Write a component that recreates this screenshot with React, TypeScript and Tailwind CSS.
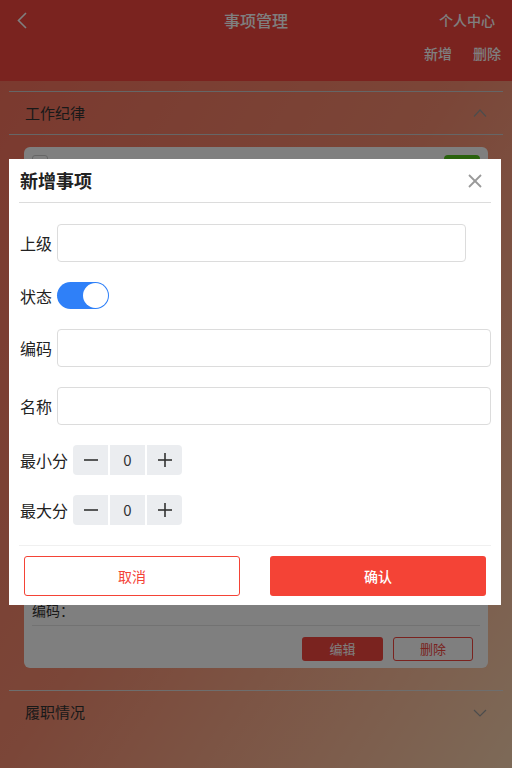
import React from 'react';

const font = { fontFamily: '"Noto Sans CJK SC", "Noto Sans", sans-serif' };

const Stepper = () => (
  <div className="flex gap-[2px]">
    <div className="w-[35px] h-[30px] bg-[#ebedf0] rounded-l-[4px] flex items-center justify-center">
      <svg width="14" height="14" viewBox="0 0 14 14">
        <line x1="0" y1="7" x2="14" y2="7" stroke="#323233" strokeWidth="1.6" />
      </svg>
    </div>
    <div className="w-[35px] h-[30px] bg-[#ebedf0] flex items-center justify-center text-[15px] text-[#323233]">0</div>
    <div className="w-[35px] h-[30px] bg-[#ebedf0] rounded-r-[4px] flex items-center justify-center">
      <svg width="14" height="14" viewBox="0 0 14 14">
        <line x1="0" y1="7" x2="14" y2="7" stroke="#323233" strokeWidth="1.6" />
        <line x1="7" y1="0" x2="7" y2="14" stroke="#323233" strokeWidth="1.6" />
      </svg>
    </div>
  </div>
);

export default function App() {
  return (
    <div className="relative w-full h-[768px] overflow-hidden" style={font}>
      {/* page */}
      <div className="h-full flex flex-col bg-linear-to-br from-[#f6705c] via-[#f68c70] to-[#fad4b0]">
        <div className="bg-[#f4463f] h-[81px] shrink-0">
          <div className="h-[40px] flex items-center justify-between px-[17px] relative">
            <svg width="10" height="17" viewBox="0 0 10 17">
              <polyline points="9,1 1.5,8.5 9,16" fill="none" stroke="#ffffff" strokeWidth="1.6" />
            </svg>
            <span className="absolute left-0 right-0 text-center text-[16px] font-medium text-white pointer-events-none">事项管理</span>
            <span className="text-[14px] font-medium text-white">个人中心</span>
          </div>
          <div className="flex justify-end gap-[21px] pr-[11px] pt-[3px] text-[14px] font-medium text-white">
            <span>新增</span>
            <span>删除</span>
          </div>
        </div>
        <div className="px-[9px] pt-[10px]">
          <div className="border-t border-[#ccc] border-b h-[44px] flex items-center justify-between px-[16px]">
            <span className="text-[15px] text-[#333]">工作纪律</span>
            <svg width="14" height="8" viewBox="0 0 14 8">
              <polyline points="1,7.5 7,1 13,7.5" fill="none" stroke="#999" strokeWidth="1.2" />
            </svg>
          </div>
          <div className="mx-[15px] mt-[12px] h-[521px] bg-white rounded-[6px] flex flex-col px-[8px]">
            <div className="flex justify-between items-start pt-[8px]">
              <div className="w-[16px] h-[16px] border border-[#ccc] rounded-[3px] bg-white" />
              <div className="w-[36px] h-[22px] bg-[#52c41a] rounded-[4px]" />
            </div>
            <div className="flex-1" />
            <div className="text-[14px] text-[#333] pb-[4px]">编码：</div>
            <div className="border-t border-[#e5e5e5] flex justify-end gap-[10px] pt-[11px] pb-[7px] pr-[7px]">
              <div className="w-[81px] h-[24px] bg-[#f4463f] rounded-[3px] flex items-center justify-center text-[13px] text-white">编辑</div>
              <div className="w-[80px] h-[24px] border border-[#f4463f] rounded-[3px] flex items-center justify-center text-[13px] text-[#f4463f]">删除</div>
            </div>
          </div>
          <div className="mt-[22px] border-t border-[#ddd] h-[44px] flex items-center justify-between px-[16px]">
            <span className="text-[15px] text-[#333]">履职情况</span>
            <svg width="14" height="8" viewBox="0 0 14 8">
              <polyline points="1,1 7,7 13,1" fill="none" stroke="#999" strokeWidth="1.2" />
            </svg>
          </div>
        </div>
      </div>

      {/* mask */}
      <div className="absolute inset-0 bg-black/50" />

      {/* dialog */}
      <div className="absolute left-[9px] top-[159px] w-[492px] h-[446px] bg-white flex flex-col">
        <div className="mx-[10px] h-[44px] border-b border-[#dcdcdc] flex items-center justify-between pl-[1px] pr-[9px]">
          <span className="text-[18px] font-bold text-[#222]">新增事项</span>
          <svg width="14" height="14" viewBox="0 0 14 14">
            <line x1="1" y1="1" x2="13" y2="13" stroke="#999" strokeWidth="1.8" />
            <line x1="13" y1="1" x2="1" y2="13" stroke="#999" strokeWidth="1.8" />
          </svg>
        </div>
        <div className="pl-[11px] pr-[10px] pt-[21px] flex flex-col gap-[20px] text-[16px] text-[#222]">
          <div className="flex items-center">
            <span className="w-[37px]">上级</span>
            <div className="w-[409px] h-[38px] border border-[#dcdcdc] rounded-[4px]" />
          </div>
          <div className="flex items-center">
            <span className="w-[37px]">状态</span>
            <div className="w-[52px] h-[27px] bg-[#2f80f8] rounded-full flex justify-end items-center pr-[1px]">
              <div className="w-[25px] h-[25px] bg-white rounded-full" />
            </div>
          </div>
          <div className="flex items-center">
            <span className="w-[37px]">编码</span>
            <div className="flex-1 h-[38px] border border-[#dcdcdc] rounded-[4px]" />
          </div>
          <div className="flex items-center">
            <span className="w-[37px]">名称</span>
            <div className="flex-1 h-[38px] border border-[#dcdcdc] rounded-[4px]" />
          </div>
          <div className="flex items-center">
            <span className="w-[53px]">最小分</span>
            <Stepper />
          </div>
          <div className="flex items-center">
            <span className="w-[53px]">最大分</span>
            <Stepper />
          </div>
        </div>
        <div className="mx-[10px] mt-[20px] border-t border-[#f0f0f0] pt-[10px] px-[5px] flex justify-between">
          <div className="w-[216px] h-[40px] border border-[#f44336] rounded-[3px] flex items-center justify-center text-[14px] text-[#f44336]">取消</div>
          <div className="w-[216px] h-[40px] bg-[#f44336] rounded-[3px] flex items-center justify-center text-[14px] text-white font-medium">确认</div>
        </div>
      </div>
    </div>
  );
}
